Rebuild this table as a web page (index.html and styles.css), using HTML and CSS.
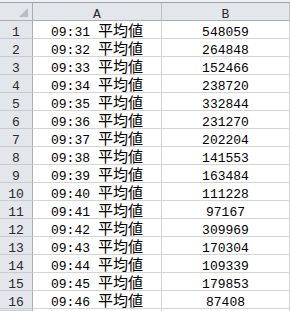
FILE: index.html
```html
<!DOCTYPE html>
<html>
<head>
<meta charset="utf-8">
<link rel="stylesheet" href="styles.css">
</head>
<body>
<div class="topstrip"></div>
<div class="sheet">
  <div class="hdr corner"><span class="tri"></span></div>
  <div class="hdr col">A</div>
  <div class="hdr col last">B</div>

  <div class="rh">1</div><div class="c a"><span class="v"><span class="t">09:31</span><span class="cjk">平均値</span></span></div><div class="c b">548059</div>
  <div class="rh">2</div><div class="c a"><span class="v"><span class="t">09:32</span><span class="cjk">平均値</span></span></div><div class="c b">264848</div>
  <div class="rh">3</div><div class="c a"><span class="v"><span class="t">09:33</span><span class="cjk">平均値</span></span></div><div class="c b">152466</div>
  <div class="rh">4</div><div class="c a"><span class="v"><span class="t">09:34</span><span class="cjk">平均値</span></span></div><div class="c b">238720</div>
  <div class="rh">5</div><div class="c a"><span class="v"><span class="t">09:35</span><span class="cjk">平均値</span></span></div><div class="c b">332844</div>
  <div class="rh">6</div><div class="c a"><span class="v"><span class="t">09:36</span><span class="cjk">平均値</span></span></div><div class="c b">231270</div>
  <div class="rh">7</div><div class="c a"><span class="v"><span class="t">09:37</span><span class="cjk">平均値</span></span></div><div class="c b">202204</div>
  <div class="rh">8</div><div class="c a"><span class="v"><span class="t">09:38</span><span class="cjk">平均値</span></span></div><div class="c b">141553</div>
  <div class="rh">9</div><div class="c a"><span class="v"><span class="t">09:39</span><span class="cjk">平均値</span></span></div><div class="c b">163484</div>
  <div class="rh">10</div><div class="c a"><span class="v"><span class="t">09:40</span><span class="cjk">平均値</span></span></div><div class="c b">111228</div>
  <div class="rh">11</div><div class="c a"><span class="v"><span class="t">09:41</span><span class="cjk">平均値</span></span></div><div class="c b">97167</div>
  <div class="rh">12</div><div class="c a"><span class="v"><span class="t">09:42</span><span class="cjk">平均値</span></span></div><div class="c b">309969</div>
  <div class="rh">13</div><div class="c a"><span class="v"><span class="t">09:43</span><span class="cjk">平均値</span></span></div><div class="c b">170304</div>
  <div class="rh">14</div><div class="c a"><span class="v"><span class="t">09:44</span><span class="cjk">平均値</span></span></div><div class="c b">109339</div>
  <div class="rh">15</div><div class="c a"><span class="v"><span class="t">09:45</span><span class="cjk">平均値</span></span></div><div class="c b">179853</div>
  <div class="rh">16</div><div class="c a"><span class="v"><span class="t">09:46</span><span class="cjk">平均値</span></span></div><div class="c b">87408</div>
  <div class="rh end"></div><div class="c a end"></div><div class="c b end"></div>
</div>
</body>
</html>
```
FILE: styles.css
```css
html, body {
  margin: 0;
  padding: 0;
  background: #ffffff;
  overflow: hidden;
}
body {
  width: 290px;
  height: 311px;
  font-family: "Liberation Mono", "Noto Sans CJK JP", monospace;
  font-size: 13px;
  color: #000;
}
.topstrip {
  height: 2px;
  background: #eef0f2;
  border-bottom: 1px solid #9ea3aa;
}
.sheet {
  display: grid;
  grid-template-columns: 33px 129px 128px;
  grid-template-rows: repeat(17, 18px) 2px;
  overflow: hidden;
}
.sheet > div {
  box-sizing: border-box;
  border-right: 1px solid #d4d4d4;
  border-bottom: 1px solid #d4d4d4;
  display: flex;
  align-items: flex-end;
  justify-content: center;
  line-height: 9px;
  padding-bottom: 1px;
  white-space: nowrap;
}
.sheet > .end {
  border-bottom: none;
  padding: 0;
}
.sheet > .hdr {
  background: #e3e6ea;
  border-right: 1px solid #bcc1c8;
  border-bottom: 1px solid #a8aeb6;
  color: #2b2b2b;
  padding-bottom: 1px;
}
.sheet > .corner {
  justify-content: flex-end;
  padding: 0 4px 3px 0;
  border-right: 1px solid #a8aeb6;
}
.tri {
  width: 9px;
  height: 9px;
  background: #b9bdc3;
  clip-path: polygon(100% 0, 100% 100%, 0 100%);
}
.sheet > .rh {
  background: #e3e6ea;
  border-right: 1px solid #a8aeb6;
  border-bottom: 1px solid #c8ccd2;
  color: #2b2b2b;
}
.v {
  display: block;
  line-height: 9px;
}
.t {
  margin-right: 8px;
}
.cjk {
  font-family: "Noto Sans CJK JP", sans-serif;
  font-size: 15px;
  line-height: 9px;
}
```
